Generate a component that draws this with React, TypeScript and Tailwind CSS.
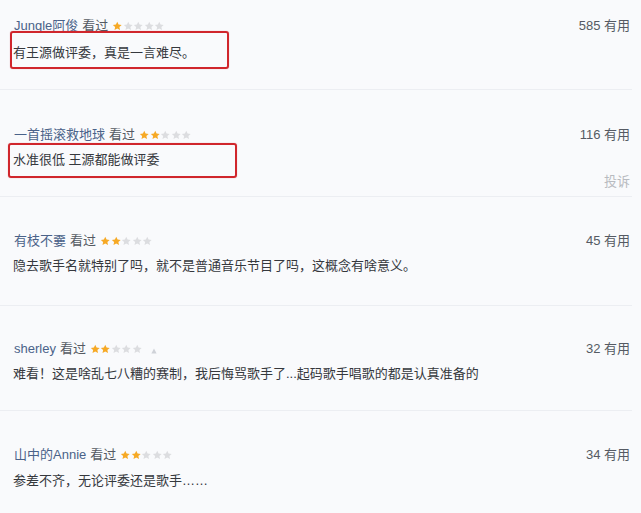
import React from 'react';

type Review = {
    name: string;
    stars: number;
    text: string;
    useful: number;
    complaint?: boolean;
    spoiler?: boolean;
    box?: string;
    rowClass: string;
    textGap: string;
};

const reviews: Review[] = [
    {
        name: 'Jungle阿俊',
        stars: 1,
        text: '有王源做评委，真是一言难尽。',
        useful: 585,
        box: 'top-[31px] left-[10px] w-[219px] h-[38px]',
        rowClass: 'pt-[16px] pb-[26px]',
        textGap: 'mt-[7px]',
    },
    {
        name: '一首摇滚救地球',
        stars: 2,
        text: '水准很低 王源都能做评委',
        useful: 116,
        complaint: true,
        box: 'top-[53px] left-[8px] w-[229px] h-[35px]',
        rowClass: 'pt-[35px] pb-[4px]',
        textGap: 'mt-[5px]',
    },
    {
        name: '有枝不嫑',
        stars: 2,
        text: '隐去歌手名就特别了吗，就不是普通音乐节目了吗，这概念有啥意义。',
        useful: 45,
        rowClass: 'pt-[34px] pb-[29px]',
        textGap: 'mt-[5px]',
    },
    {
        name: 'sherley',
        stars: 2,
        text: '难看！这是啥乱七八糟的赛制，我后悔骂歌手了...起码歌手唱歌的都是认真准备的',
        useful: 32,
        spoiler: true,
        rowClass: 'pt-[33px] pb-[26px]',
        textGap: 'mt-[5px]',
    },
    {
        name: '山中的Annie',
        stars: 2,
        text: '参差不齐，无论评委还是歌手……',
        useful: 34,
        rowClass: 'pt-[34px] pb-[40px]',
        textGap: 'mt-[6px]',
    },
];

const Star: React.FC<{ on: boolean }> = ({ on }) => (
    <svg width="10.5" height="10" viewBox="0 0 24 24">
        <path
            d="M12 1.5l3.2 6.9 7.4.9-5.5 5.1 1.5 7.4L12 18.1l-6.6 3.7 1.5-7.4-5.5-5.1 7.4-.9z"
            fill={on ? '#f6a925' : '#dcdde0'}
        />
    </svg>
);

const App: React.FC = () => {
    return (
        <div
            className="w-[641px] h-[513px] overflow-hidden bg-[#f9fafc] text-[13px] leading-5"
            style={{ fontFamily: '"Liberation Sans", "Noto Sans CJK SC", sans-serif' }}
        >
            <div className="w-[632px]">
                {reviews.map((r, i) => (
                    <div
                        key={i}
                        className={`relative pl-[13px] pr-[2px] ${r.rowClass} ${i < reviews.length - 1 ? 'border-b border-[#eceef2]' : ''}`}
                    >
                        <div className="flex items-center justify-between h-5">
                            <div className="flex items-center">
                                <span className="text-[#4a6289] ml-[1px]">{r.name}</span>
                                <span className="text-[#555a63] ml-[4px]">看过</span>
                                <span className="flex items-center ml-[4px]">
                                    {[0, 1, 2, 3, 4].map((s) => (
                                        <Star key={s} on={s < r.stars} />
                                    ))}
                                </span>
                                {r.spoiler && (
                                    <svg className="ml-[9px] mt-[3px]" width="6" height="6" viewBox="0 0 6 6">
                                        <path d="M3 0.5L5.6 5.5H0.4z" fill="#cfd2d8" />
                                    </svg>
                                )}
                            </div>
                            <span className="text-[#555a63]">{r.useful} 有用</span>
                        </div>
                        <p className={`${r.textGap} text-[#35383d]`}>{r.text}</p>
                        {r.complaint && <div className="mt-[2px] text-right text-[#b8bbc0]">投诉</div>}
                        {r.box && (
                            <div
                                className={`absolute ${r.box} border-2 border-[#d0262c] rounded-[3px] shadow-[0_0_1px_rgba(200,30,40,0.5)]`}
                            />
                        )}
                    </div>
                ))}
            </div>
        </div>
    );
};

export default App;
